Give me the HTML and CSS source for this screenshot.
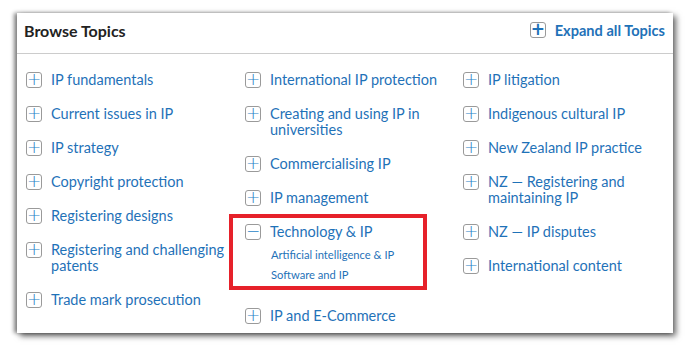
FILE: index.html
```html
<!DOCTYPE html>
<html lang="en">
<head>
    <meta charset="UTF-8">
    <meta name="viewport" content="width=device-width, initial-scale=1.0">
    <title>Browse Topics</title>
    <link rel="stylesheet" href="styles.css">
</head>
<body>
    <div class="card">
        <div class="card-head">
            <h2>Browse Topics</h2>
            <a class="expand-all" href="#"><span class="toggle bold">+</span>Expand all Topics</a>
        </div>
        <div class="topics">
            <ul class="col">
                <li><span class="toggle">+</span><a href="#">IP fundamentals</a></li>
                <li><span class="toggle">+</span><a href="#">Current issues in IP</a></li>
                <li><span class="toggle">+</span><a href="#">IP strategy</a></li>
                <li><span class="toggle">+</span><a href="#">Copyright protection</a></li>
                <li><span class="toggle">+</span><a href="#">Registering designs</a></li>
                <li><span class="toggle">+</span><a href="#">Registering and challenging patents</a></li>
                <li><span class="toggle">+</span><a href="#">Trade mark prosecution</a></li>
            </ul>
            <ul class="col">
                <li><span class="toggle">+</span><a href="#">International IP protection</a></li>
                <li><span class="toggle">+</span><a href="#">Creating and using IP in universities</a></li>
                <li><span class="toggle">+</span><a href="#">Commercialising IP</a></li>
                <li><span class="toggle">+</span><a href="#">IP management</a></li>
                <li class="open">
                    <span class="toggle">&minus;</span>
                    <div>
                        <a href="#">Technology &amp; IP</a>
                        <ul class="sub">
                            <li><a href="#">Artificial intelligence &amp; IP</a></li>
                            <li><a href="#">Software and IP</a></li>
                        </ul>
                    </div>
                </li>
                <li><span class="toggle">+</span><a href="#">IP and E-Commerce</a></li>
            </ul>
            <ul class="col">
                <li><span class="toggle">+</span><a href="#">IP litigation</a></li>
                <li><span class="toggle">+</span><a href="#">Indigenous cultural IP</a></li>
                <li><span class="toggle">+</span><a href="#">New Zealand IP practice</a></li>
                <li><span class="toggle">+</span><a href="#">NZ — Registering and maintaining IP</a></li>
                <li><span class="toggle">+</span><a href="#">NZ — IP disputes</a></li>
                <li><span class="toggle">+</span><a href="#">International content</a></li>
            </ul>
        </div>
    </div>
</body>
</html>
```

FILE: styles.css
```css
body {
    margin: 0;
    padding: 13px 15px 15px 17px;
    background-color: white;
    font-family: Lato, "Liberation Sans", sans-serif;
}
.card {
    width: 656px;
    height: 320px;
    box-sizing: border-box;
    background-color: white;
    box-shadow: 3px 3px 6px rgba(0, 0, 0, 0.6), -3px 0 4px rgba(0, 0, 0, 0.45);
}
.card-head {
    display: flex;
    justify-content: space-between;
    align-items: center;
    height: 34px;
    padding: 0 8px 6px 7px;
    border-bottom: 1px solid #ccc;
}
h2 {
    margin: 0;
    font-size: 16px;
    font-weight: bold;
    color: #222;
}
a {
    color: #1f72b8;
    text-decoration: none;
}
.expand-all {
    display: flex;
    align-items: center;
    gap: 9px;
    font-size: 14.6px;
    font-weight: bold;
}
.toggle {
    flex: none;
    width: 14px;
    height: 14px;
    border: 1px solid #9a9a9a;
    border-radius: 3px;
    color: #2a82c8;
    font-family: "DejaVu Sans", sans-serif;
    font-size: 17px;
    font-weight: 300;
    line-height: 13px;
    text-align: center;
}
.toggle.bold {
    font-weight: bold;
    color: #1f72b8;
}
.topics {
    display: grid;
    grid-template-columns: 219px 218px 200px;
    padding: 17.5px 0 0 9px;
}
.col {
    list-style: none;
    margin: 0;
    padding: 0;
    display: flex;
    flex-direction: column;
    gap: 17.5px;
}
.col > li {
    display: flex;
    gap: 9px;
    font-size: 14.5px;
    line-height: 16.5px;
    padding-right: 6px;
}
.col > li.open {
    margin: -10.5px 0 0 -16px;
    width: 198px;
    box-sizing: border-box;
    padding: 6px 0 1px 12px;
    border: 4px solid #e6212a;
}
.sub {
    list-style: none;
    margin: 5px 0 0 1px;
    padding: 0;
}
.sub li {
    font-size: 11.2px;
    line-height: 20px;
}
```
